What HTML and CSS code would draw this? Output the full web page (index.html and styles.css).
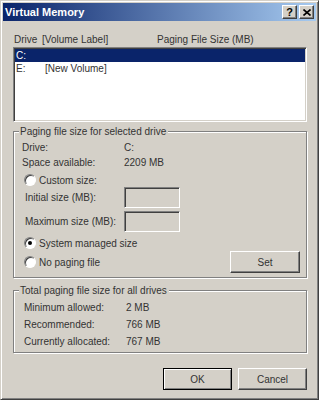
FILE: index.html
```html
<!DOCTYPE html>
<html lang="en">
<head>
    <meta charset="UTF-8">
    <title>Virtual Memory</title>
    <link rel="stylesheet" href="styles.css">
</head>
<body>
<div class="window">
    <div class="titlebar">
        <span class="title">Virtual Memory</span>
        <div class="caption-buttons">
            <span class="cap-btn help">?</span>
            <span class="cap-btn">
                <svg width="8" height="7" viewBox="0 0 8 7"><path d="M0.5 0.5 L7.5 6.5 M7.5 0.5 L0.5 6.5" stroke="#000" stroke-width="1.6" fill="none"/></svg>
            </span>
        </div>
    </div>

    <div class="content">
        <div class="list-header">
            <span class="col-drive">Drive</span>
            <span class="col-label">[Volume Label]</span>
            <span class="col-size">Paging File Size (MB)</span>
        </div>
        <div class="listbox">
            <div class="list-row selected">
                <span class="col-drive">C:</span>
                <span class="col-label"></span>
            </div>
            <div class="list-row">
                <span class="col-drive">E:</span>
                <span class="col-label">[New Volume]</span>
            </div>
        </div>

        <div class="group group-drive">
            <span class="legend">Paging file size for selected drive</span>
            <div class="row info-row"><span class="label">Drive:</span><span>C:</span></div>
            <div class="row info-row gap1"><span class="label">Space available:</span><span>2209 MB</span></div>
            <div class="row radio-row gap4"><span class="radio"></span>Custom size:</div>
            <div class="row field-row"><span class="label field-label">Initial size (MB):</span><span class="edit"></span></div>
            <div class="row field-row gap3"><span class="label field-label">Maximum size (MB):</span><span class="edit"></span></div>
            <div class="row radio-row gap4"><span class="radio checked"></span>System managed size</div>
            <div class="row button-row gap1">
                <div class="radio-row"><span class="radio"></span>No paging file</div>
                <button class="btn set">Set</button>
            </div>
        </div>

        <div class="group group-total">
            <span class="legend">Total paging file size for all drives</span>
            <div class="row info-row"><span class="label">Minimum allowed:</span><span>2 MB</span></div>
            <div class="row info-row gap3"><span class="label">Recommended:</span><span>766 MB</span></div>
            <div class="row info-row gap3"><span class="label">Currently allocated:</span><span>767 MB</span></div>
        </div>

        <div class="dialog-buttons">
            <button class="btn default">OK</button>
            <button class="btn">Cancel</button>
        </div>
    </div>
</div>
</body>
</html>
```

FILE: styles.css
```css
body {
    margin: 0;
    font-family: "Liberation Sans", Arial, sans-serif;
    font-size: 10px;
    color: #333;
    background: #d4d0c8;
}
.window {
    width: 319px;
    height: 400px;
    box-sizing: border-box;
    background: #d4d0c8;
    border: 1px solid;
    border-color: #d4d0c8 #404040 #404040 #d4d0c8;
    box-shadow: inset 1px 1px 0 #fff, inset -1px -1px 0 #808080;
    padding: 2px;
}
.titlebar {
    height: 18px;
    display: flex;
    align-items: center;
    justify-content: space-between;
    padding-left: 2px;
    background: linear-gradient(to right, #0a246a, #a6caf0);
}
.title {
    color: #fff;
    font-weight: bold;
    font-size: 11px;
}
.caption-buttons {
    display: flex;
    gap: 2px;
    margin-right: 2px;
}
.cap-btn {
    width: 15px;
    height: 14px;
    box-sizing: border-box;
    background: #d4d0c8;
    border: 1px solid;
    border-color: #fff #404040 #404040 #fff;
    box-shadow: inset -1px -1px 0 #808080;
    display: flex;
    align-items: center;
    justify-content: center;
    color: #000;
}
.help {
    font-weight: bold;
    font-size: 11px;
    line-height: 12px;
}
.content {
    padding: 0 9px 0 10px;
}
.list-header {
    margin-top: 13px;
    height: 12px;
    line-height: 12px;
    display: flex;
    padding-left: 1px;
}
.col-drive {
    width: 28px;
}
.col-label {
    width: 115px;
}
.listbox {
    margin-top: 1px;
    height: 75px;
    box-sizing: border-box;
    background: #fff;
    border: 1px solid;
    border-color: #808080 #fff #fff #808080;
    box-shadow: inset 1px 1px 0 #404040, inset -1px -1px 0 #d4d0c8;
    padding: 1px;
}
.list-row {
    height: 13px;
    line-height: 13px;
    display: flex;
    padding-left: 1px;
}
.list-row .col-label {
    padding-left: 1px;
}
.list-row.selected {
    background: #0a246a;
    color: #fff;
}
.group {
    position: relative;
    border: 1px solid #808080;
    box-shadow: 1px 1px 0 #fff, inset 1px 1px 0 #fff;
}
.legend {
    position: absolute;
    top: -7px;
    left: 5px;
    padding: 0 2px 0 1px;
    line-height: 13px;
    background: #d4d0c8;
}
.group-drive {
    margin-top: 9px;
    padding: 8px 6px 4px 8px;
}
.group-total {
    margin-top: 12px;
    padding: 9px 6px 4px 10px;
}
.row {
    display: flex;
    align-items: center;
}
.gap1 { margin-top: 1px; }
.gap3 { margin-top: 3px; }
.gap4 { margin-top: 4px; }
.info-row {
    height: 14px;
}
.label {
    width: 102px;
}
.field-row {
    height: 21px;
}
.field-label {
    padding-left: 3px;
    width: 99px;
}
.edit {
    width: 56px;
    height: 21px;
    box-sizing: border-box;
    background: #d4d0c8;
    border: 1px solid;
    border-color: #808080 #fff #fff #808080;
    box-shadow: inset 1px 1px 0 #404040, inset -1px -1px 0 #d4d0c8;
}
.radio-row {
    display: flex;
    align-items: center;
    height: 14px;
    gap: 3px;
    padding-left: 2px;
}
.radio {
    width: 12px;
    height: 12px;
    box-sizing: border-box;
    border-radius: 50%;
    background: #fff;
    border: 1px solid;
    border-color: #808080 #fff #fff #808080;
    box-shadow: inset 1px 1px 0 #404040;
    position: relative;
}
.radio.checked::after {
    content: "";
    position: absolute;
    left: 3px;
    top: 3px;
    width: 4px;
    height: 4px;
    border-radius: 50%;
    background: #000;
}
.button-row {
    justify-content: space-between;
    height: 22px;
}
.btn {
    width: 69px;
    height: 22px;
    box-sizing: border-box;
    padding: 0;
    font-family: "Liberation Sans", Arial, sans-serif;
    font-size: 10px;
    color: #333;
    background: #d4d0c8;
    border: 1px solid;
    border-color: #fff #404040 #404040 #fff;
    box-shadow: inset -1px -1px 0 #808080;
}
.btn.set {
    width: 70px;
}
.btn.default {
    border-color: #000;
    box-shadow: inset 1px 1px 0 #fff, inset -1px -1px 0 #808080;
}
.dialog-buttons {
    margin-top: 15px;
    display: flex;
    justify-content: flex-end;
    gap: 6px;
}
```
